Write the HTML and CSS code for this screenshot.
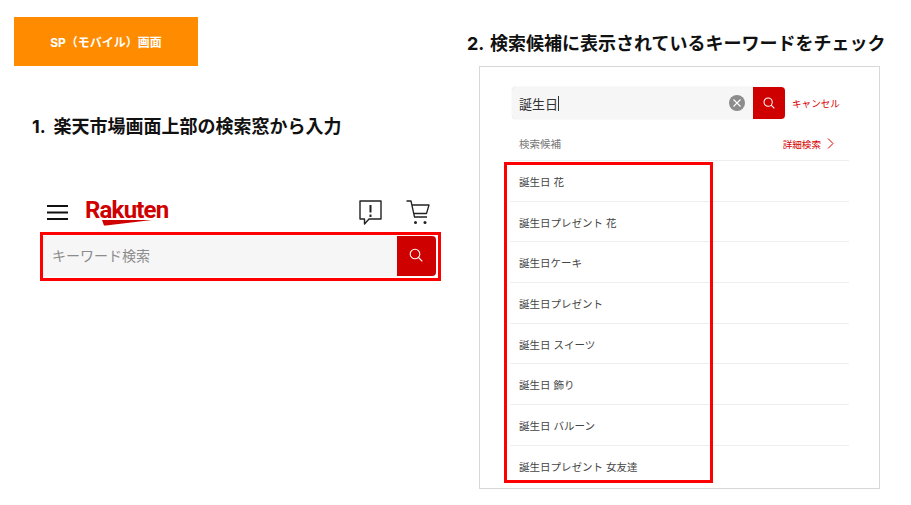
FILE: index.html
```html
<!DOCTYPE html>
<html lang="ja">
<head>
  <meta charset="UTF-8" />
  <title>SP（モバイル）画面</title>
  <link rel="stylesheet" href="styles.css">
</head>
<body>
  <main class="page">
    <section class="left">
      <div class="badge">SP（モバイル）画面</div>
      <h2 class="step step-one">1. 楽天市場画面上部の検索窓から入力</h2>
      <div class="phone-head">
        <svg class="burger" width="21" height="15" viewBox="0 0 21 15"><path d="M0 1h21M0 7.500h21M0 14h21" stroke="#111" stroke-width="1.800" fill="none"/></svg>
        <div class="logo">
          <span class="logo-text">Rakuten</span>
          <svg class="logo-swoosh" width="50" height="6" viewBox="0 0 50 6"><path d="M0 0 50 0 4 5.500 2 5.500Z" fill="#cf0000"/></svg>
        </div>
        <div class="head-icons">
          <svg width="23" height="25" viewBox="0 0 23 25"><path d="M1 1h21v18H10l-4.500 5v-5H1Z" fill="none" stroke="#222" stroke-width="1.400" stroke-linejoin="round"/><path d="M11.500 5v7.500M11.500 14.500v2.500" stroke="#222" stroke-width="2" fill="none"/></svg>
          <svg width="24" height="25" viewBox="0 0 24 25"><path d="M0.500 1h4.500l3.500 16h12.500M6 5h17l-2.500 8.500H8" fill="none" stroke="#222" stroke-width="1.300" stroke-linejoin="round"/><circle cx="9.500" cy="22.500" r="1.500" fill="#222"/><circle cx="19" cy="22.500" r="1.500" fill="#222"/></svg>
        </div>
      </div>
      <div class="search-frame">
        <div class="search search-big">
          <span class="placeholder">キーワード検索</span>
          <span class="search-btn">
            <svg class="glass" width="14" height="14" viewBox="0 0 14 14"><circle cx="6" cy="6" r="4.800" fill="none" stroke="#fff" stroke-width="1.100"/><path d="M9.500 9.500 13.300 13.300" stroke="#fff" stroke-width="1.100"/></svg>
          </span>
        </div>
      </div>
    </section>

    <section class="right">
      <h2 class="step step-two">2. 検索候補に表示されているキーワードをチェック</h2>
      <div class="panel">
        <div class="panel-top">
          <div class="search search-small">
            <span class="typed">誕生日</span>
            <svg class="clear" width="16" height="16" viewBox="0 0 16 16"><circle cx="8" cy="8" r="8" fill="#8c8c8c"/><path d="M4.500 4.500l7 7M11.500 4.500l-7 7" stroke="#fff" stroke-width="1.100"/></svg>
            <span class="search-btn">
              <svg width="12" height="12" viewBox="0 0 14 14"><circle cx="6" cy="6" r="4.800" fill="none" stroke="#fff" stroke-width="1.200"/><path d="M9.500 9.500 13.300 13.300" stroke="#fff" stroke-width="1.200"/></svg>
            </span>
          </div>
          <span class="cancel">キャンセル</span>
        </div>
        <div class="list-head">
          <span>検索候補</span>
          <span class="detail">詳細検索
            <svg width="7" height="11" viewBox="0 0 7 11"><path d="M1 .5 6 5.500 1 10.500" fill="none" stroke="#d60000" stroke-width="1"/></svg>
          </span>
        </div>
        <ul class="suggest">
          <li>誕生日 花</li>
          <li>誕生日プレゼント 花</li>
          <li>誕生日ケーキ</li>
          <li>誕生日プレゼント</li>
          <li>誕生日 スイーツ</li>
          <li>誕生日 飾り</li>
          <li>誕生日 バルーン</li>
          <li>誕生日プレゼント 女友達</li>
        </ul>
        <div class="highlight"></div>
      </div>
    </section>
  </main>
</body>
</html>
```

FILE: styles.css
```css
body, html {
  margin: 0;
  padding: 0;
  background-color: #fff;
  color: #111;
  font-family: 'Inter', 'Noto Sans CJK JP', sans-serif;
}
.page {
  display: flex;
  align-items: flex-start;
  height: 505px;
  overflow: hidden;
}
.left {
  width: 467px;
  box-sizing: border-box;
  padding: 17px 0 0 14px;
}
.badge {
  width: 184px;
  height: 49px;
  display: flex;
  align-items: center;
  justify-content: center;
  background-color: #ff8c00;
  color: #fff;
  font-size: 12px;
  font-weight: 700;
}
.step {
  margin: 0;
  font-size: 18px;
  line-height: 26px;
  font-weight: 700;
  white-space: nowrap;
}
.step-one {
  margin: 48px 0 0 18px;
  word-spacing: 4px;
}
.step-two {
  margin-top: 31px;
  word-spacing: 2px;
}
.phone-head {
  display: flex;
  align-items: center;
  width: 383px;
  height: 32px;
  margin: 56px 0 0 33px;
}
.burger {
  margin-right: 17px;
}
.logo {
  position: relative;
  width: 84px;
  height: 25px;
}
.logo-text {
  display: block;
  color: #cf0000;
  font-family: 'Roboto', sans-serif;
  font-size: 24px;
  line-height: 20px;
  font-weight: 700;
  letter-spacing: -0.8px;
}
.logo-swoosh {
  position: absolute;
  left: 17px;
  top: 20px;
}
.head-icons {
  display: flex;
  gap: 24px;
  margin-left: auto;
}
.search-frame {
  width: 401px;
  height: 49px;
  box-sizing: border-box;
  margin: 4px 0 0 26px;
  padding: 1px 2px 2px 0;
  border: 3px solid #f00;
}
.search {
  display: flex;
  align-items: center;
  background-color: #f6f6f6;
  border-radius: 4px;
  box-shadow: 0 0 1px rgba(0,0,0,0.2);
  overflow: hidden;
}
.search-big {
  height: 40px;
}
.placeholder {
  flex: 1;
  padding: 0 0 2px 9px;
  color: #8c8c8c;
  font-size: 14px;
}
.search-btn {
  display: flex;
  align-items: center;
  justify-content: center;
  align-self: stretch;
  width: 39px;
  background-color: #cf0000;
}
.glass {
  margin: 0 2px 2px 0;
}
.right {
  width: 444px;
}
.panel {
  position: relative;
  width: 401px;
  height: 423px;
  box-sizing: border-box;
  margin: 9px 0 0 12px;
  padding: 20px 30px 0;
  border: 1px solid #d8d8d8;
}
.panel-top {
  display: flex;
  align-items: center;
  margin-left: 2px;
}
.search-small {
  width: 273px;
  height: 32px;
}
.search-small .search-btn {
  width: 32px;
}
.typed {
  flex: 1;
  padding-left: 7px;
  color: #333;
  font-size: 13px;
}
.typed::after {
  content: "";
  display: inline-block;
  width: 1px;
  height: 15px;
  vertical-align: -2px;
  background-color: #333;
}
.clear {
  margin-right: 8px;
}
.cancel {
  margin-left: 7px;
  color: #d60000;
  font-size: 9.600px;
  white-space: nowrap;
}
.list-head {
  display: flex;
  justify-content: space-between;
  align-items: center;
  height: 33px;
  padding: 8px 15px 0 9px;
  border-bottom: 1px solid #eee;
  color: #777;
  font-size: 10.500px;
}
.detail {
  display: flex;
  align-items: center;
  gap: 6px;
  color: #d60000;
  font-size: 9.600px;
}
.suggest {
  margin: 0;
  padding: 0;
  list-style: none;
}
.suggest li {
  display: flex;
  align-items: center;
  height: 38.700px;
  padding: 1px 0 0 9px;
  border-bottom: 1px solid #eee;
  color: #444;
  font-size: 10.500px;
  white-space: pre;
}
.suggest li:last-child {
  border-bottom: none;
}
.highlight {
  position: absolute;
  left: 24px;
  top: 95px;
  width: 209px;
  height: 321px;
  box-sizing: border-box;
  border: 3px solid #f00;
}
```
